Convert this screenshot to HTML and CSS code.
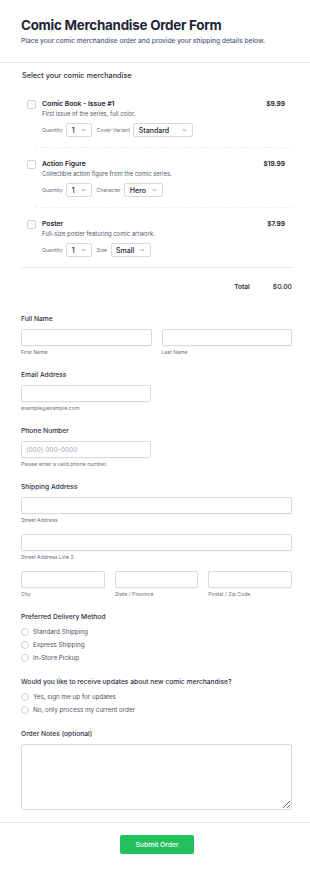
FILE: index.html
```html
<!DOCTYPE html>
<html lang="en">
<head>
<meta charset="utf-8">
<title>Comic Merchandise Order Form</title>
<link rel="stylesheet" href="styles.css">
</head>
<body>
<header class="header">
  <h1 class="title">Comic Merchandise Order Form</h1>
  <p class="subtitle">Place your comic merchandise order and provide your shipping details below.</p>
</header>
<main class="form">
  <section class="products">
    <h2 class="section-title">Select your comic merchandise</h2>
    <div class="product-list">
      <div class="product">
        <span class="checkbox"></span>
        <div class="product-body">
          <div class="product-head"><span class="product-name">Comic Book - Issue #1</span><span class="price">$9.99</span></div>
          <p class="product-desc">First issue of the series, full color.</p>
          <div class="options">
            <span class="opt-label">Quantity</span>
            <span class="select"><span>1</span><svg class="chev" viewBox="0 0 6 4" width="5" height="4"><path d="M1 1l2 2 2-2" fill="none" stroke="#6b7280" stroke-width="0.9"/></svg></span>
            <span class="opt-label">Cover Variant</span>
            <span class="select select-wide"><span>Standard</span><svg class="chev" viewBox="0 0 6 4" width="5" height="4"><path d="M1 1l2 2 2-2" fill="none" stroke="#6b7280" stroke-width="0.9"/></svg></span>
          </div>
        </div>
      </div>
      <div class="divider"></div>
      <div class="product">
        <span class="checkbox"></span>
        <div class="product-body">
          <div class="product-head"><span class="product-name">Action Figure</span><span class="price">$19.99</span></div>
          <p class="product-desc">Collectible action figure from the comic series.</p>
          <div class="options">
            <span class="opt-label">Quantity</span>
            <span class="select"><span>1</span><svg class="chev" viewBox="0 0 6 4" width="5" height="4"><path d="M1 1l2 2 2-2" fill="none" stroke="#6b7280" stroke-width="0.9"/></svg></span>
            <span class="opt-label">Character</span>
            <span class="select"><span>Hero</span><svg class="chev" viewBox="0 0 6 4" width="5" height="4"><path d="M1 1l2 2 2-2" fill="none" stroke="#6b7280" stroke-width="0.9"/></svg></span>
          </div>
        </div>
      </div>
      <div class="divider"></div>
      <div class="product">
        <span class="checkbox"></span>
        <div class="product-body">
          <div class="product-head"><span class="product-name">Poster</span><span class="price">$7.99</span></div>
          <p class="product-desc">Full-size poster featuring comic artwork.</p>
          <div class="options">
            <span class="opt-label">Quantity</span>
            <span class="select"><span>1</span><svg class="chev" viewBox="0 0 6 4" width="5" height="4"><path d="M1 1l2 2 2-2" fill="none" stroke="#6b7280" stroke-width="0.9"/></svg></span>
            <span class="opt-label">Size</span>
            <span class="select"><span>Small</span><svg class="chev" viewBox="0 0 6 4" width="5" height="4"><path d="M1 1l2 2 2-2" fill="none" stroke="#6b7280" stroke-width="0.9"/></svg></span>
          </div>
        </div>
      </div>
    </div>
    <div class="total-row"><span class="total-label">Total</span><span class="total-value">$0.00</span></div>
  </section>

  <div class="fields">
    <div class="field">
      <label class="label">Full Name</label>
      <div class="row row-2">
        <div class="cell"><input class="input" type="text"><span class="sub">First Name</span></div>
        <div class="cell"><input class="input" type="text"><span class="sub">Last Name</span></div>
      </div>
    </div>

    <div class="field">
      <label class="label">Email Address</label>
      <div class="cell half"><input class="input" type="email"><span class="sub">example@example.com</span></div>
    </div>

    <div class="field">
      <label class="label">Phone Number</label>
      <div class="cell half"><input class="input" type="tel" placeholder="(000) 000-0000"><span class="sub">Please enter a valid phone number.</span></div>
    </div>

    <div class="field">
      <label class="label">Shipping Address</label>
      <div class="address">
        <div class="cell"><input class="input" type="text"><span class="sub">Street Address</span></div>
        <div class="cell"><input class="input" type="text"><span class="sub">Street Address Line 2</span></div>
        <div class="row row-3">
          <div class="cell"><input class="input" type="text"><span class="sub">City</span></div>
          <div class="cell"><input class="input" type="text"><span class="sub">State / Province</span></div>
          <div class="cell"><input class="input" type="text"><span class="sub">Postal / Zip Code</span></div>
        </div>
      </div>
    </div>

    <div class="field">
      <span class="label">Preferred Delivery Method</span>
      <div class="radios">
        <label class="radio"><input type="radio" name="delivery"><span>Standard Shipping</span></label>
        <label class="radio"><input type="radio" name="delivery"><span>Express Shipping</span></label>
        <label class="radio"><input type="radio" name="delivery"><span>In-Store Pickup</span></label>
      </div>
    </div>

    <div class="field">
      <span class="label">Would you like to receive updates about new comic merchandise?</span>
      <div class="radios">
        <label class="radio"><input type="radio" name="updates"><span>Yes, sign me up for updates</span></label>
        <label class="radio"><input type="radio" name="updates"><span>No, only process my current order</span></label>
      </div>
    </div>

    <div class="field field-last">
      <label class="label">Order Notes (optional)</label>
      <textarea class="textarea"></textarea>
    </div>
  </div>
</main>
<footer class="footer">
  <button class="submit" type="button">Submit Order</button>
</footer>
</body>
</html>
```

FILE: styles.css
```css
* { box-sizing: border-box; }

html, body {
  margin: 0;
  padding: 0;
  background: #ffffff;
}

body {
  font-family: Inter, "Noto Sans", "Liberation Sans", sans-serif;
  color: #1f2937;
}

.header {
  padding: 17px 21px 16px;
  border-bottom: 1px solid #e6e8ec;
}

.title {
  margin: 0;
  font-size: 13.4px;
  line-height: 17px;
  font-weight: 700;
  color: #1e2536;
  letter-spacing: -0.25px;
}

.subtitle {
  margin: 2.5px 0 0;
  font-size: 6.6px;
  line-height: 9px;
  font-weight: 500;
  color: #4a5a82;
}

.form {
  padding: 0 18px 12px 21px;
  border-bottom: 1px solid #e6e8ec;
}

.section-title {
  margin: 8px 0 0 1px;
  font-size: 7.3px;
  line-height: 10px;
  font-weight: 500;
  color: #2f3642;
}

.product-list {
  margin-top: 7.5px;
  border-bottom: 1px solid #e3e5e9;
}

.product {
  display: flex;
  align-items: flex-start;
  gap: 6px;
  padding: 10px 7px 10px 6px;
}

.checkbox {
  flex: none;
  width: 9px;
  height: 9px;
  margin-top: 1.5px;
  border: 1px solid #cfd3d9;
  border-radius: 2px;
  background: #fff;
}

.product-body {
  flex: 1;
  min-width: 0;
}

.product-head {
  display: flex;
  justify-content: space-between;
  align-items: center;
  height: 11px;
}

.product-name {
  font-size: 6.8px;
  font-weight: 600;
  color: #1f2533;
}

.price {
  font-size: 6.5px;
  font-weight: 700;
  color: #222834;
}

.product-desc {
  margin: 0;
  font-size: 5.9px;
  line-height: 9px;
  color: #50596a;
}

.options {
  display: flex;
  align-items: center;
  margin-top: 5px;
  height: 14px;
}

.opt-label {
  font-size: 5.2px;
  color: #6b7280;
  margin-right: 3.5px;
}

.select {
  display: inline-flex;
  align-items: center;
  justify-content: space-between;
  gap: 6px;
  height: 14px;
  padding: 0 5px 0 4.5px;
  border: 1px solid #d6d9df;
  border-radius: 2px;
  background: #fff;
  font-size: 7px;
  font-weight: 500;
  color: #1f2533;
  margin-right: 5px;
}

.select-wide {
  width: 60px;
}

.chev {
  display: block;
  flex: none;
}

.divider {
  margin-left: 14px;
  border-top: 1px dashed #eceef1;
}

.total-row {
  display: flex;
  justify-content: flex-end;
  gap: 23px;
  padding-top: 15px;
  line-height: 8px;
}

.total-label {
  font-size: 6.5px;
  font-weight: 600;
  color: #262c38;
}

.total-value {
  font-size: 6.8px;
  font-weight: 500;
  color: #262c38;
}

.fields {
  margin-top: 23px;
}

.field {
  margin-bottom: 14px;
}

.field-last {
  margin-bottom: 0;
}

.label {
  display: block;
  font-size: 6.7px;
  line-height: 10px;
  font-weight: 500;
  color: #2a3243;
  margin-bottom: 5px;
}

.row {
  display: grid;
  gap: 10px;
}

.row-2 {
  grid-template-columns: 1fr 1fr;
}

.row-3 {
  grid-template-columns: 1fr 1fr 1fr;
}

.cell {
  display: flex;
  flex-direction: column;
}

.half {
  width: 130px;
}

.address {
  display: flex;
  flex-direction: column;
  gap: 10px;
}

.input {
  display: block;
  width: 100%;
  height: 17px;
  margin: 0;
  padding: 0 4px;
  border: 1px solid #d7dae0;
  border-radius: 2px;
  background: #fff;
  font-family: inherit;
  font-size: 6.6px;
  color: #1f2937;
  box-shadow: 0 1px 1px rgba(0, 0, 0, 0.03);
}

.input::placeholder {
  color: #a3a9b4;
}

.sub {
  display: block;
  margin-top: 3px;
  font-size: 5.2px;
  line-height: 7px;
  color: #6b7280;
}

.radios {
  display: flex;
  flex-direction: column;
  gap: 3px;
}

.radio {
  display: flex;
  align-items: center;
  gap: 4px;
  height: 10px;
  font-size: 6.3px;
  color: #4b5363;
}

.radio input {
  appearance: none;
  -webkit-appearance: none;
  margin: 0;
  width: 8px;
  height: 8px;
  border: 1px solid #cdd1d7;
  border-radius: 50%;
  background: #fff;
  flex: none;
}

.textarea {
  display: block;
  width: 100%;
  height: 66px;
  margin: 0;
  padding: 4px;
  border: 1px solid #d7dae0;
  border-radius: 2px;
  background: #fff;
  font-family: inherit;
  font-size: 7px;
  resize: vertical;
}

.footer {
  display: flex;
  justify-content: center;
  padding: 12px 0 17px;
}

.submit {
  width: 74px;
  height: 19px;
  margin: 0 0 0 4px;
  padding: 0;
  border: none;
  border-radius: 2px;
  background: #22c15e;
  color: #ffffff;
  font-family: inherit;
  font-size: 6.8px;
  font-weight: 500;
}
```
